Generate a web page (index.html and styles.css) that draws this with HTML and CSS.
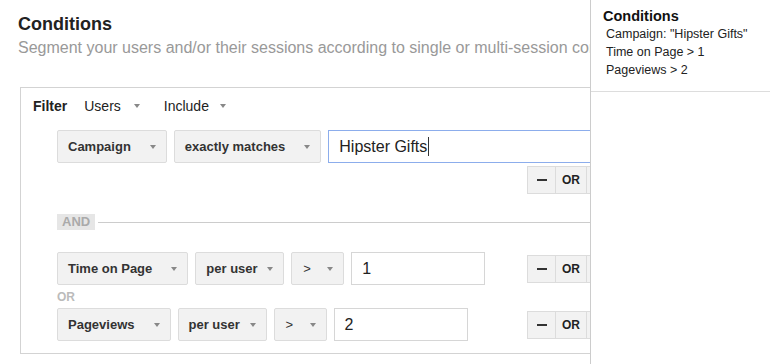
FILE: index.html
```html
<!DOCTYPE html>
<html lang="en">
<head>
<meta charset="UTF-8" />
<title>Segment Conditions</title>
<link rel="stylesheet" href="styles.css">
</head>
<body>

<div class="main">
  <h1 class="title">Conditions</h1>
  <p class="subtitle">Segment your users and/or their sessions according to single or multi-session conditions.</p>

  <div class="filter-box">
    <div class="filter-head">
      <b>Filter</b>
      <span class="menu">Users <i class="caret"></i></span>
      <span class="menu">Include <i class="caret"></i></span>
    </div>

    <div class="cond">
      <div class="fields fields-wide">
        <span class="drop">Campaign <i class="caret"></i></span>
        <span class="drop">exactly matches <i class="caret"></i></span>
        <span class="field field-focus">Hipster Gifts<i class="cursor"></i></span>
      </div>
      <div class="actions">
        <span class="act"><i class="minus"></i></span>
        <span class="act">OR</span>
        <span class="act act-more"></span>
      </div>
    </div>

    <div class="and-sep"><span class="and-label">AND</span></div>

    <div class="cond">
      <div class="fields">
        <span class="drop">Time on Page <i class="caret"></i></span>
        <span class="drop drop-scope">per user <i class="caret"></i></span>
        <span class="drop drop-op">&gt; <i class="caret"></i></span>
        <span class="field">1</span>
      </div>
      <div class="actions">
        <span class="act"><i class="minus"></i></span>
        <span class="act">OR</span>
        <span class="act act-more"></span>
      </div>
    </div>

    <div class="or-label">OR</div>

    <div class="cond">
      <div class="fields">
        <span class="drop">Pageviews <i class="caret"></i></span>
        <span class="drop drop-scope">per user <i class="caret"></i></span>
        <span class="drop drop-op">&gt; <i class="caret"></i></span>
        <span class="field">2</span>
      </div>
      <div class="actions">
        <span class="act"><i class="minus"></i></span>
        <span class="act">OR</span>
        <span class="act act-more"></span>
      </div>
    </div>
  </div>
</div>

<aside class="summary">
  <div class="summary-head">
    <h2>Conditions</h2>
    <div class="summary-item">Campaign: "Hipster Gifts"</div>
    <div class="summary-item">Time on Page &gt; 1</div>
    <div class="summary-item">Pageviews &gt; 2</div>
  </div>
</aside>

</body>
</html>
```

FILE: styles.css
```css
html, body { margin: 0; height: 100%; }
body {
  font-family: "Liberation Sans", Arial, sans-serif; background: #fff; color: #222;
  overflow: hidden; position: relative;
}

/* main column is cut off by the summary panel on the right */
.main {
  width: 590px; height: 100%; overflow: hidden; box-sizing: border-box;
  padding: 13px 0 0 18px;
}
.title { margin: 0; font-size: 18px; line-height: 22px; font-weight: bold; color: #222; }
.subtitle {
  margin: 3px 0 0; font-size: 16px; line-height: 20px; color: #999;
  white-space: nowrap; overflow: hidden;
}

.filter-box {
  margin: 29px 0 0 2px; width: 740px; border: 1px solid #d3d3d3;
  padding: 9px 0 12px 12px;
}
.filter-head {
  display: flex; align-items: center; font-size: 14px; line-height: 18px; color: #222;
}
.filter-head b { margin-right: 17px; }
.menu { display: inline-flex; align-items: center; margin-right: 24px; }
.menu .caret { margin-left: 13px; }
.menu + .menu .caret { margin-left: 11px; }

.caret {
  display: inline-block; width: 0; height: 0;
  border-left: 3.5px solid transparent; border-right: 3.5px solid transparent;
  border-top: 4px solid #888;
}

.cond {
  display: grid; grid-template-columns: 470px auto; align-items: center;
  margin-left: 24px; margin-top: 15px;
}
.fields { display: flex; gap: 7px; }
.fields-wide { grid-column: 1 / -1; }
.fields-wide + .actions { grid-column: 2; margin-top: 3px; }

.drop {
  display: inline-flex; align-items: center; box-sizing: border-box; height: 33px;
  padding: 0 10px; background: #f2f2f2; border: 1px solid #dcdcdc; border-radius: 2px;
  font-size: 13px; font-weight: bold; color: #333; white-space: nowrap;
}
.drop .caret { margin-left: 19px; }
.drop-scope { width: 89px; }
.drop-op { width: 53px; padding-left: 11px; font-weight: normal; }
.drop-scope .caret, .drop-op .caret { margin-left: auto; }

.field {
  display: inline-flex; align-items: center; box-sizing: border-box; height: 33px; width: 134px;
  padding: 0 10px; border: 1px solid #d6d6d6; font-size: 16px; color: #222; background: #fff;
}
.field-focus { width: 300px; border-color: #8cadec; }
.cursor { display: inline-block; width: 1px; height: 19px; background: #333; margin-left: 1px; }

.actions { display: flex; }
.act {
  display: inline-flex; align-items: center; justify-content: center; box-sizing: border-box;
  height: 28px; min-width: 29px; padding: 0 6px; margin-right: -1px;
  background: #f2f2f2; border: 1px solid #dcdcdc; font-size: 12px; font-weight: bold; color: #222;
}
.act-more { width: 40px; }
.minus { display: block; width: 10px; height: 2px; background: #333; }

.and-sep { display: flex; align-items: center; margin: 20px 0 0 24px; }
.and-sep::after { content: ""; flex: 1; height: 1px; background: #ccc; margin-left: 3px; }
.and-label {
  background: #e6e6e6; color: #aaa; font-size: 13px; font-weight: bold;
  line-height: 16px; padding: 0 5px;
}
.and-sep + .cond { margin-top: 22px; }

.or-label {
  margin: 5px 0 0 24px; font-size: 12px; line-height: 14px; font-weight: bold; color: #bbb;
}
.or-label + .cond { margin-top: 4px; }

.summary {
  position: absolute; top: 0; bottom: 0; left: 590px; right: 0;
  background: #fff; border-left: 1px solid #ccc;
}
.summary-head {
  box-sizing: border-box; height: 92px; padding: 7px 0 0 12px; border-bottom: 1px solid #ddd;
}
.summary h2 { margin: 0; font-size: 14.5px; line-height: 18px; font-weight: bold; color: #111; }
.summary-item { padding-left: 3px; font-size: 12.5px; line-height: 18px; color: #222; }
```
